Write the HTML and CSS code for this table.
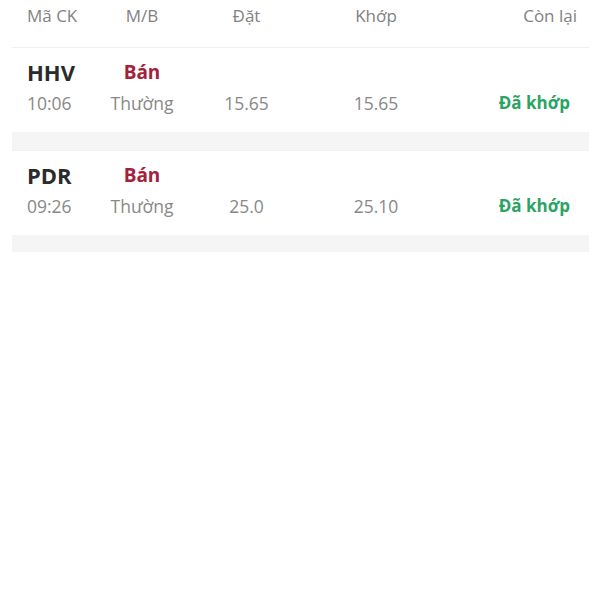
FILE: index.html
```html
<!DOCTYPE html>
<html lang="vi">
<head>
<meta charset="utf-8">
<link rel="stylesheet" href="styles.css">
</head>
<body>
<div class="page">
  <div class="grid head">
    <div class="c1">Mã CK</div>
    <div class="c2">M/B</div>
    <div class="c3">Đặt</div>
    <div class="c4">Khớp</div>
    <div class="c5">Còn lại</div>
  </div>
  <div class="card">
    <div class="grid top">
      <div class="c1 sym">HHV</div>
      <div class="c2 side">Bán</div>
      <div></div><div></div><div></div>
    </div>
    <div class="grid sub">
      <div class="c1">10:06</div>
      <div class="c2">Thường</div>
      <div class="c3">15.65</div>
      <div class="c4">15.65</div>
      <div class="c5 status">Đã khớp</div>
    </div>
  </div>
  <div class="band"></div>
  <div class="card">
    <div class="grid top">
      <div class="c1 sym">PDR</div>
      <div class="c2 side">Bán</div>
      <div></div><div></div><div></div>
    </div>
    <div class="grid sub">
      <div class="c1">09:26</div>
      <div class="c2">Thường</div>
      <div class="c3">25.0</div>
      <div class="c4">25.10</div>
      <div class="c5 status">Đã khớp</div>
    </div>
  </div>
  <div class="band last"></div>
</div>
</body>
</html>
```
FILE: styles.css
```css
html, body {
  margin: 0;
  padding: 0;
  background: #ffffff;
  font-family: "Open Sans", "Noto Sans", sans-serif;
}
.page {
  padding: 0 11px 0 12px;
}
.grid {
  display: grid;
  grid-template-columns: 63px 104px 105px 154px 1fr;
  align-items: center;
  padding: 0 12px 0 15px;
}
.c1 { text-align: left; }
.c2, .c3, .c4 { text-align: center; }
.c5 { text-align: right; }
.head {
  height: 47px;
  font-size: 17px;
  line-height: 23px;
  color: #828282;
  align-items: start;
  padding-top: 4px;
  box-sizing: border-box;
}
.card {
  border-top: 1px solid #f0f0f0;
  background: #fff;
  padding: 9px 0 17px;
}
.top {
  height: 28px;
}
.sym {
  font-size: 22px;
  font-weight: 700;
  color: #2b2b2b;
}
.side {
  font-size: 19px;
  font-weight: 700;
  color: #a3213b;
}
.sub {
  margin-top: 6px;
  font-size: 17.5px;
  line-height: 24px;
  color: #888888;
}
.status {
  color: #2aa463;
  font-weight: 700;
  font-size: 17px;
  padding-right: 7px;
}
.band {
  height: 18px;
  background: #f5f5f5;
}
.band.last {
  height: 17px;
}
```
